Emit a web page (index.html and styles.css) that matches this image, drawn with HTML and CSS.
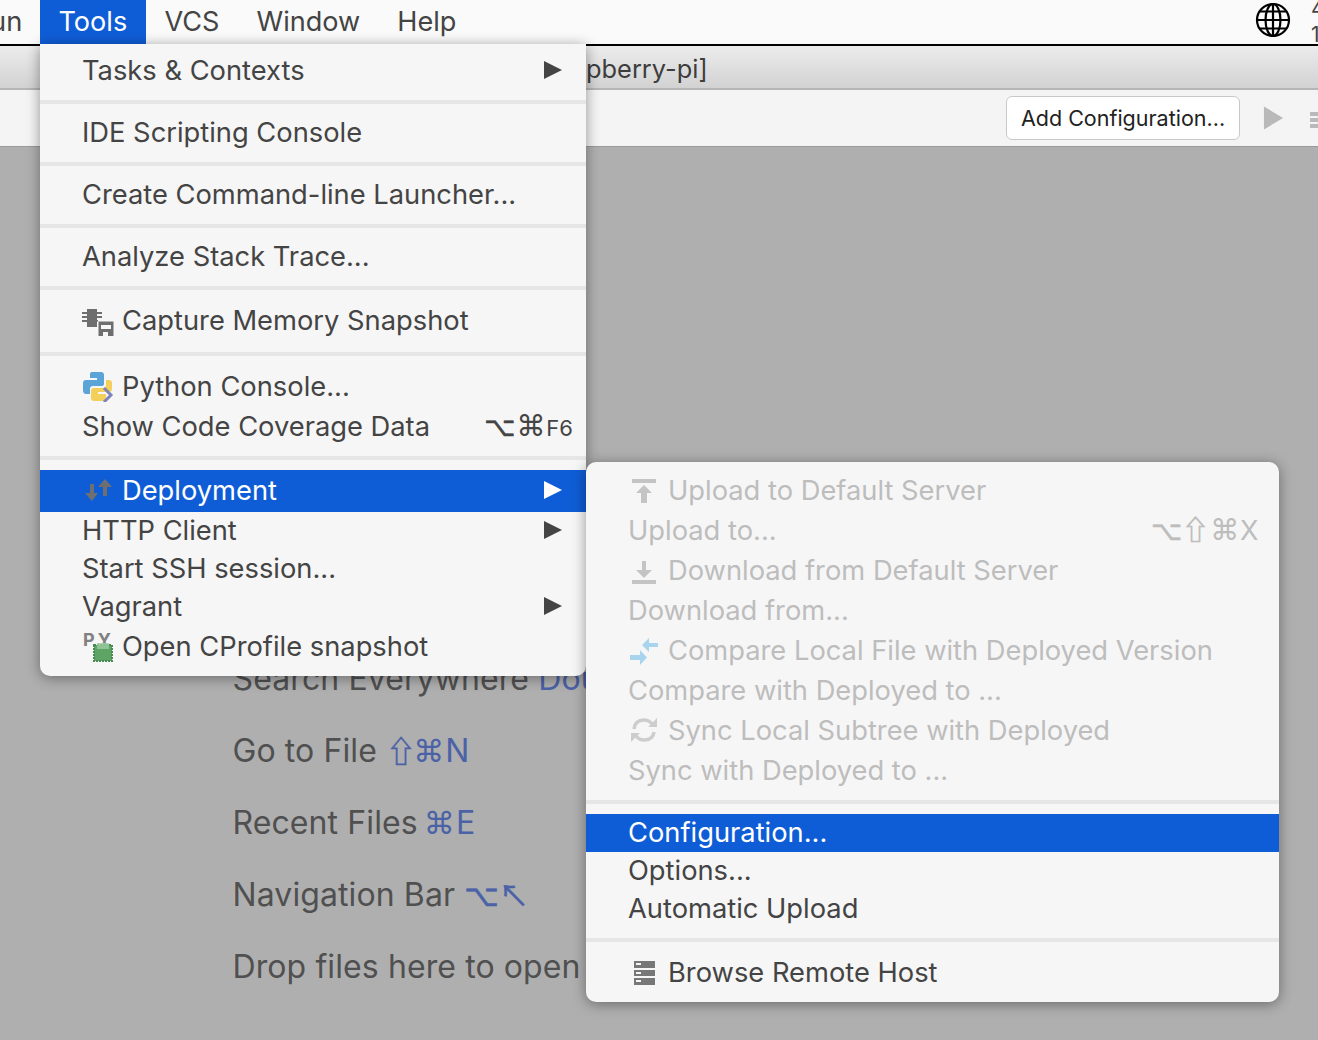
FILE: index.html
```html
<!DOCTYPE html>
<html lang="en">
<head>
  <meta charset="UTF-8" />
  <meta name="viewport" content="width=device-width, initial-scale=1.0" />
  <title>Tools menu</title>
  <link rel="stylesheet" href="styles.css">
</head>
<body>
  <div class="menubar">
    <span class="bar-clip">un</span>
    <span class="bar-item active">Tools</span>
    <span class="bar-item">VCS</span>
    <span class="bar-item">Window</span>
    <span class="bar-item">Help</span>
    <svg class="globe" viewBox="0 0 36 36">
      <circle cx="18" cy="18" r="16" />
      <ellipse cx="18" cy="18" rx="7.5" ry="16" />
      <path d="M18 2V34M2 18H34M4.5 9.5H31.5M4.5 26.5H31.5" />
    </svg>
    <span class="clock">4<br>1</span>
  </div>

  <div class="titlebar">pberry-pi]</div>

  <div class="toolbar">
    <button class="add-config">Add Configuration...</button>
    <svg class="run-icon" viewBox="0 0 22 24"><path d="M1 0L21 12L1 24Z" /></svg>
    <svg class="debug-icon" viewBox="0 0 8 24"><path d="M0 6H8V10H0ZM0 12H8V16H0ZM0 18H8V22H0Z" /></svg>
  </div>

  <div class="workspace">
    <div class="hint">Search Everywhere <span class="key">Double <span class="sym">⇧</span></span></div>
    <div class="hint">Go to File <span class="key"><span class="sym">⇧</span><span class="cmd">⌘</span>N</span></div>
    <div class="hint">Recent Files <span class="key"><span class="cmd">⌘</span>E</span></div>
    <div class="hint">Navigation Bar <span class="key"><span class="sym">⌥↖</span></span></div>
    <div class="hint">Drop files here to open</div>
  </div>

  <div class="menu tools-menu">
    <div class="section first">
      <div class="item">Tasks &amp; Contexts<span class="arrow"></span></div>
    </div>
    <div class="section">
      <div class="item">IDE Scripting Console</div>
    </div>
    <div class="section">
      <div class="item">Create Command-line Launcher...</div>
    </div>
    <div class="section">
      <div class="item">Analyze Stack Trace...</div>
    </div>
    <div class="section tall">
      <div class="item">
        <svg class="icon" viewBox="0 0 32 32">
          <path fill="#6e6e6e" d="M5 5H15V23H5ZM0 8H20V10H0ZM0 12H20V14H0ZM0 16H16V18H0Z" />
          <path fill="#6e6e6e" stroke="#f6f6f6" d="M16 17H32V33H16Z" />
          <path fill="#f6f6f6" d="M19 21H29V25H19ZM21 28H26V33H21Z" />
        </svg>
        Capture Memory Snapshot
      </div>
    </div>
    <div class="section">
      <div class="item">
        <svg class="icon" viewBox="0 0 32 32">
          <path fill="#5ba4d8" d="M10 2H19Q22 2 22 5V14Q22 16 19 16H11Q8 16 8 19V24H4Q1 24 1 20V13Q1 10 4 10H15V8H8V4Q8 2 10 2Z" />
          <path fill="#f4cf5c" d="M24 10H27Q30 10 30 13V19Q30 22 27 22H16V24H24V28Q24 31 21 31H12Q9 31 9 28V21Q9 18 12 18H21Q24 18 24 15Z" />
          <path fill="none" stroke="#7c84b8" stroke-width="3" d="M22 18L29 25L22 32" />
        </svg>
        Python Console...
      </div>
      <div class="item">Show Code Coverage Data<span class="shortcut dark"><span class="sym">⌥</span><span class="cmd">⌘</span><small>F6</small></span></div>
    </div>
    <div class="section last">
      <div class="item selected big">
        <svg class="icon" viewBox="0 0 32 32">
          <path fill="#6f6f6f" d="M8 10H12V19H16L10 27L3 19H8ZM21 22H25V13H30L23 5L16 13H21Z" />
        </svg>
        Deployment<span class="arrow"></span>
      </div>
      <div class="item short">HTTP Client<span class="arrow"></span></div>
      <div class="item short">Start SSH session...</div>
      <div class="item short">Vagrant<span class="arrow"></span></div>
      <div class="item big">
        <svg class="icon" viewBox="0 0 32 32">
          <text class="py-label" x="1" y="16">PY</text>
          <path fill="#5ea565" stroke="#4a8a52" stroke-dasharray="2 1" stroke-width="2" d="M12 15H30V31H12Z" />
          <path fill="#9ccba1" opacity="0.8" d="M15 13H27V19H15Z" />
        </svg>
        Open CProfile snapshot
      </div>
    </div>
  </div>

  <div class="menu deploy-menu">
    <div class="section sub-top">
      <div class="item off">
        <svg class="icon" viewBox="0 0 32 32">
          <path fill="#c4c4c4" d="M4 5H28V9H4ZM16 11L24 19H19V29H13V19H8Z" />
        </svg>
        Upload to Default Server
      </div>
      <div class="item off">Upload to...<span class="shortcut"><span class="sym">⌥⇧</span><span class="cmd">⌘</span>X</span></div>
      <div class="item off">
        <svg class="icon" viewBox="0 0 32 32">
          <path fill="#c4c4c4" d="M14 7H18V16H24L16 24L8 16H14ZM4 26H28V30H4Z" />
        </svg>
        Download from Default Server
      </div>
      <div class="item off">Download from...</div>
      <div class="item off">
        <svg class="icon" viewBox="0 0 32 32">
          <path fill="#a9d4ee" d="M30 9H21V4L14 11L21 18V13H30ZM2 21H12V16L19 23.5L12 31V26H2Z" />
        </svg>
        Compare Local File with Deployed Version
      </div>
      <div class="item off">Compare with Deployed to ...</div>
      <div class="item off">
        <svg class="icon" viewBox="0 0 32 32">
          <path fill="none" stroke="#cdcdcd" stroke-width="3.5" d="M6 15Q7 6 16 6Q21 6 24 10M26 18Q25 26 16 26Q11 26 8 22" />
          <path fill="#cdcdcd" d="M20 13H29V4ZM3 19H12L3 28Z" />
        </svg>
        Sync Local Subtree with Deployed
      </div>
      <div class="item off">Sync with Deployed to ...</div>
    </div>
    <div class="section sub-mid">
      <div class="item selected short">Configuration...</div>
      <div class="item short">Options...</div>
      <div class="item short">Automatic Upload</div>
    </div>
    <div class="section sub-end">
      <div class="item">
        <svg class="icon" viewBox="0 0 32 32">
          <path fill="#777" d="M6 5H27V12H6ZM6 14H27V20H6ZM6 22H27V29H6Z" />
          <path fill="#f6f6f6" d="M8 7H13V9H8ZM8 16H13V18H8ZM8 24H13V26H8Z" />
        </svg>
        Browse Remote Host
      </div>
    </div>
  </div>
</body>
</html>
```

FILE: styles.css
```css
* {
  box-sizing: border-box;
}
html, body {
  height: 100%;
}
body {
  margin: 0;
  height: 1040px;
  overflow: hidden;
  position: relative;
  display: flex;
  flex-direction: column;
  font-family: Inter, "Noto Sans", sans-serif;
  font-size: 27.3px;
  color: #444;
  background: #afafaf;
}
.sym {
  font-family: "Noto Sans CJK JP", "DejaVu Sans", sans-serif;
  line-height: 0;
  -webkit-text-stroke: 0.6px currentColor;
}
.cmd {
  font-family: "DejaVu Sans", sans-serif;
  line-height: 0;
  margin: 0 2px;
}

/* top bars */
.menubar {
  height: 46px;
  flex: none;
  display: flex;
  align-items: flex-start;
  background: #fafafa;
  border-bottom: 2px solid #000;
  overflow: hidden;
}
.bar-clip {
  width: 50px;
  margin-left: -10px;
  line-height: 44px;
}
.bar-item {
  height: 44px;
  line-height: 44px;
  padding: 0 18.5px;
  font-size: 27.1px;
}
.bar-item.active {
  width: 106px;
  background: #0f5dd6;
  color: #fff;
}
.globe {
  width: 36px;
  height: 36px;
  margin: 2px 0 0 auto;
  fill: none;
  stroke: #000;
  stroke-width: 2.2;
}
.clock {
  width: 7px;
  margin-left: 20px;
  font-size: 21px;
  line-height: 26px;
  overflow: hidden;
  margin-top: -4px;
}
.titlebar {
  height: 44px;
  flex: none;
  padding-left: 586px;
  line-height: 46px;
  font-size: 25.4px;
  color: #3d3d3d;
  background: linear-gradient(#ececec, #d2d2d2);
  border-bottom: 2px solid #b5b5b5;
}
.toolbar {
  height: 57px;
  flex: none;
  display: flex;
  align-items: center;
  padding: 0 0 0 1006px;
  background: #f4f4f4;
  border-bottom: 1px solid #9a9a9a;
  overflow: hidden;
}
.add-config {
  width: 234px;
  height: 44px;
  padding: 0;
  font-family: inherit;
  font-size: 21.5px;
  color: #222;
  background: #fff;
  border: 1px solid #c9c9c9;
  border-radius: 6px;
}
.run-icon {
  width: 21px;
  height: 24px;
  margin-left: 23px;
  fill: #b9b9b9;
}
.debug-icon {
  width: 8px;
  height: 24px;
  margin-left: 26px;
  fill: #b9b9b9;
}

/* empty editor hints */
.workspace {
  flex: 1;
  padding: 496px 0 0 232.5px;
}
.hint {
  height: 72px;
  line-height: 72px;
  font-size: 32px;
  letter-spacing: 0.1px;
  color: #505050;
  white-space: nowrap;
}
.key {
  color: #4b62a6;
}
.key .sym {
  font-size: 30px;
}
.key .cmd {
  font-size: 31px;
  margin: 0 1px 0 -3px;
}

/* menus */
.menu {
  position: absolute;
  background: #f6f6f6;
  box-shadow: 0 2px 14px rgba(0, 0, 0, 0.4);
}
.tools-menu {
  left: 40px;
  top: 44px;
  width: 546px;
  border-radius: 0 0 10px 10px;
}
.deploy-menu {
  left: 586px;
  top: 462px;
  width: 692.5px;
  border-radius: 10px;
}
.section {
  padding: 8px 0 10px;
  border-bottom: 4px solid #e6e6e6;
}
.section.first {
  padding: 6px 0 10px;
}
.section.tall {
  padding: 10px 0 12px;
}
.tools-menu .section:nth-child(6) {
  padding: 10px 0;
}
.section.last {
  padding: 10px 0 8px;
  border-bottom: 0;
}
.sub-top {
  padding: 8px 0 10px;
}
.sub-mid {
  padding: 10px 0;
}
.sub-end {
  padding: 10px 0;
  border-bottom: 0;
}
.item {
  height: 40px;
  display: flex;
  align-items: center;
  padding: 0 20px 0 42px;
  white-space: nowrap;
}
.item.big {
  height: 42px;
  padding-bottom: 2px;
}
.item.short {
  height: 38px;
  padding-bottom: 2px;
}
.item.selected {
  background: #0f5dd6;
  color: #fff;
}
.item.off {
  color: #bdbdbd;
}
.icon {
  width: 32px;
  height: 32px;
  flex: none;
  margin: 0 8px 0 0;
  overflow: hidden;
}
.py-label {
  font-size: 18px;
  font-weight: 700;
  letter-spacing: 3px;
  fill: #808080;
}
.arrow {
  margin: 0 4px 0 auto;
  border-left: 18px solid #444;
  border-top: 9px solid transparent;
  border-bottom: 9px solid transparent;
}
.selected .arrow {
  border-left-color: #fff;
}
.shortcut {
  margin-left: auto;
  font-size: 27px;
  color: #bdbdbd;
}
.shortcut.dark {
  color: #444;
  margin-right: -7px;
}
.shortcut .cmd {
  font-size: 29px;
  margin: 0 1px;
}
.shortcut small {
  font-size: 22px;
}
```
